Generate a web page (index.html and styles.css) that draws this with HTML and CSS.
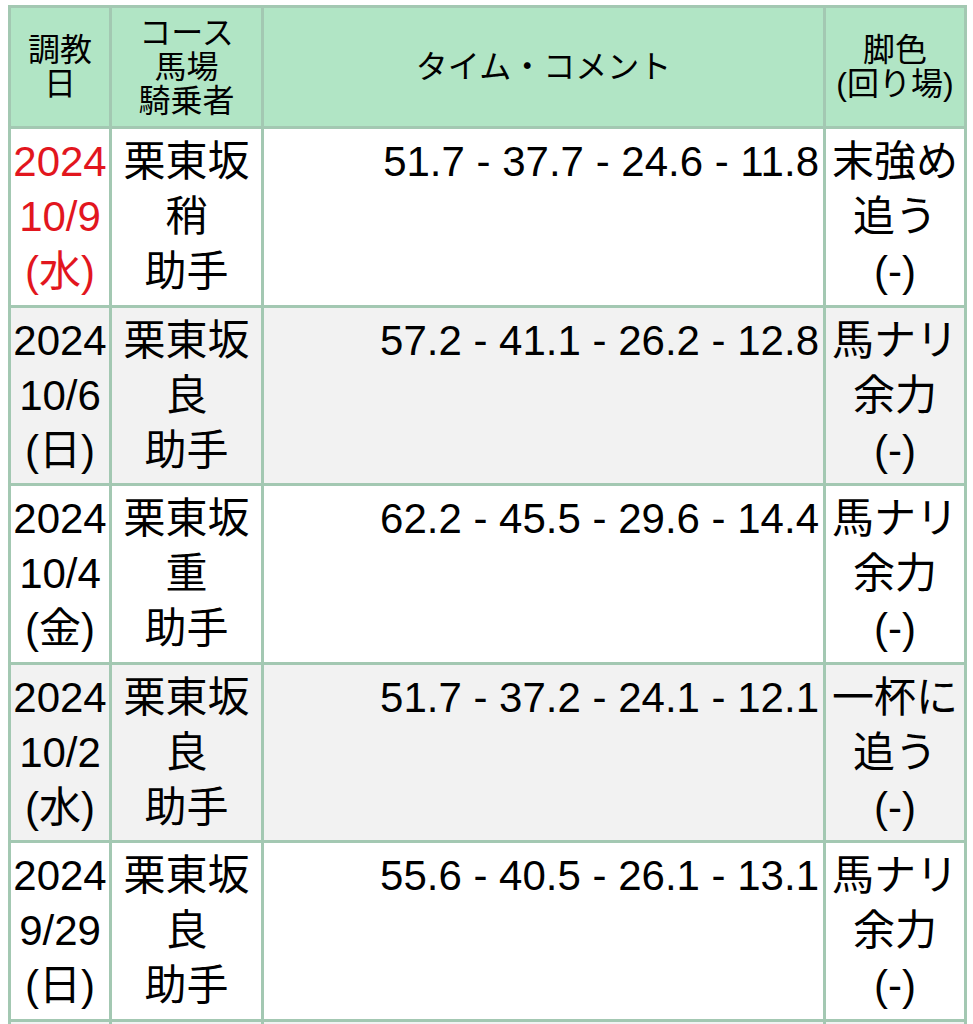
FILE: index.html
```html
<!DOCTYPE html>
<html lang="ja">
<head>
<meta charset="utf-8">
<title>調教</title>
<link rel="stylesheet" href="styles.css">
</head>
<body>
<table class="oikiri">
  <colgroup>
    <col class="c-date">
    <col class="c-course">
    <col class="c-time">
    <col class="c-leg">
  </colgroup>
  <thead>
    <tr>
      <th>調教<br>日</th>
      <th>コース<br>馬場<br>騎乗者</th>
      <th>タイム・コメント</th>
      <th>脚色<br>(回り場)</th>
    </tr>
  </thead>
  <tbody>
    <tr>
      <td class="date latest">2024<br>10/9<br>(水)</td>
      <td class="course">栗東坂<br>稍<br>助手</td>
      <td class="time">51.7 - 37.7 - 24.6 - 11.8</td>
      <td class="leg">末強め<br>追う<br>(-)</td>
    </tr>
    <tr class="alt">
      <td class="date">2024<br>10/6<br>(日)</td>
      <td class="course">栗東坂<br>良<br>助手</td>
      <td class="time">57.2 - 41.1 - 26.2 - 12.8</td>
      <td class="leg">馬ナリ<br>余力<br>(-)</td>
    </tr>
    <tr>
      <td class="date">2024<br>10/4<br>(金)</td>
      <td class="course">栗東坂<br>重<br>助手</td>
      <td class="time">62.2 - 45.5 - 29.6 - 14.4</td>
      <td class="leg">馬ナリ<br>余力<br>(-)</td>
    </tr>
    <tr class="alt">
      <td class="date">2024<br>10/2<br>(水)</td>
      <td class="course">栗東坂<br>良<br>助手</td>
      <td class="time">51.7 - 37.2 - 24.1 - 12.1</td>
      <td class="leg">一杯に<br>追う<br>(-)</td>
    </tr>
    <tr>
      <td class="date">2024<br>9/29<br>(日)</td>
      <td class="course">栗東坂<br>良<br>助手</td>
      <td class="time">55.6 - 40.5 - 26.1 - 13.1</td>
      <td class="leg">馬ナリ<br>余力<br>(-)</td>
    </tr>
    <tr class="alt">
      <td class="date">2024<br>9/26<br>(木)</td>
      <td class="course">栗東坂<br>良<br>助手</td>
      <td class="time">56.0 - 40.8 - 26.3 - 13.0</td>
      <td class="leg">馬ナリ<br>余力<br>(-)</td>
    </tr>
  </tbody>
</table>
</body>
</html>
```

FILE: styles.css
```css
html, body {
  margin: 0;
  padding: 0;
  background: #ffffff;
}

body {
  padding: 5px 0 0 8px;
  font-family: "Liberation Sans", "Noto Sans CJK JP", sans-serif;
  color: #000000;
}

.oikiri {
  border-collapse: collapse;
  table-layout: fixed;
  width: 956px;
  border: 3px solid #9fbfac;
}

.c-date { width: 101px; }
.c-course { width: 152px; }
.c-time { width: 562px; }
.c-leg { width: 141px; }

.oikiri th,
.oikiri td {
  border: 3px solid #a3c8b2;
}

.oikiri th {
  background: #b1e5c5;
  font-weight: normal;
  font-size: 32px;
  line-height: 34px;
  height: 121px;
  padding: 0;
  text-align: center;
  vertical-align: middle;
  box-sizing: border-box;
}

.oikiri td {
  font-size: 42px;
  line-height: 55px;
  padding: 5px 2px 5.5px 2px;
  vertical-align: top;
  text-align: center;
  white-space: nowrap;
}

.oikiri tr.alt td {
  background: #f2f2f2;
}

.oikiri td.latest {
  color: #e2161e;
}

.oikiri td.time {
  text-align: right;
  padding-right: 4px;
}
```
